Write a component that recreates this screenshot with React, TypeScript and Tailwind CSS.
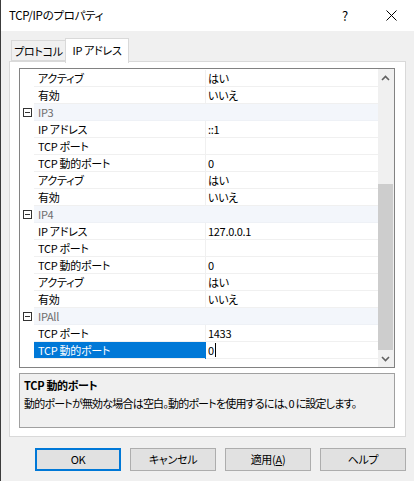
import React from 'react';

type Row =
    | { kind: 'cat'; label: string }
    | { kind: 'prop'; label: string; value: string; selected?: boolean };

const rows: Row[] = [
    { kind: 'prop', label: 'アクティブ', value: 'はい' },
    { kind: 'prop', label: '有効', value: 'いいえ' },
    { kind: 'cat', label: 'IP3' },
    { kind: 'prop', label: 'IP アドレス', value: '::1' },
    { kind: 'prop', label: 'TCP ポート', value: '' },
    { kind: 'prop', label: 'TCP 動的ポート', value: '0' },
    { kind: 'prop', label: 'アクティブ', value: 'はい' },
    { kind: 'prop', label: '有効', value: 'いいえ' },
    { kind: 'cat', label: 'IP4' },
    { kind: 'prop', label: 'IP アドレス', value: '127.0.0.1' },
    { kind: 'prop', label: 'TCP ポート', value: '' },
    { kind: 'prop', label: 'TCP 動的ポート', value: '0' },
    { kind: 'prop', label: 'アクティブ', value: 'はい' },
    { kind: 'prop', label: '有効', value: 'いいえ' },
    { kind: 'cat', label: 'IPAll' },
    { kind: 'prop', label: 'TCP ポート', value: '1433' },
    { kind: 'prop', label: 'TCP 動的ポート', value: '0', selected: true },
];

const Collapse = () => (
    <svg width="9" height="9" viewBox="0 0 9 9" className="block">
        <rect x="0.5" y="0.5" width="8" height="8" fill="white" stroke="#333" />
        <line x1="2" y1="4.5" x2="7" y2="4.5" stroke="#333" />
    </svg>
);

const GridRow = ({ row }: { row: Row }) => {
    if (row.kind === 'cat') {
        return (
            <div className="flex h-[17px]">
                <div className="w-[14px] flex items-center justify-center pl-[1px]">
                    <Collapse />
                </div>
                <div className="flex-1 bg-[#f3f6fb] border-b border-[#eef1f6] pl-[4px] leading-[16px] text-[#6d6d6d]">
                    {row.label}
                </div>
            </div>
        );
    }
    return (
        <div className="flex h-[17px]">
            <div className="w-[14px]" />
            <div
                className={`w-[171px] pl-[4px] leading-[16px] border-b border-[#f0f0f0] whitespace-nowrap ${
                    row.selected ? 'bg-[#0078d7] text-white' : ''
                }`}
            >
                {row.label}
            </div>
            <div className={`w-[1px] ${row.selected ? 'bg-[#0078d7]' : 'bg-[#f0f0f0]'}`} />
            <div className="flex-1 pl-[2px] leading-[16px] border-b border-[#f0f0f0] flex items-center">
                <span>{row.value}</span>
                {row.selected && <span className="ml-[1px] w-[1px] h-[14px] bg-black" />}
            </div>
        </div>
    );
};

const Chevron = ({ up }: { up?: boolean }) => (
    <svg width="9" height="6" viewBox="0 0 9 6" className="block">
        <path
            d={up ? 'M1 5 L4.5 1.5 L8 5' : 'M1 1 L4.5 4.5 L8 1'}
            fill="none"
            stroke="#606060"
            strokeWidth="1.6"
        />
    </svg>
);

const Button = ({ children, primary }: { children: React.ReactNode; primary?: boolean }) => (
    <div
        className={`w-[86px] h-[23px] flex items-center justify-center bg-[#e1e1e1] ${
            primary ? 'border-2 border-[#0078d7]' : 'border border-[#adadad]'
        }`}
    >
        {children}
    </div>
);

const App: React.FC = () => {
    return (
        <div className="w-[414px] h-[481px] bg-[#f0f0f0] border-l border-[#3c3c3c] flex flex-col text-[11px] tracking-[-0.3px] text-black font-['Noto_Sans_CJK_JP',sans-serif] [font-feature-settings:'palt'] overflow-hidden">
            {/* title bar */}
            <div className="h-[31px] bg-white flex items-center pl-[8px] shrink-0 text-[11.5px]">
                <span className="flex-1">TCP/IPのプロパティ</span>
                <span className="w-[46px] text-center text-[13px]">?</span>
                <span className="w-[46px] flex justify-center">
                    <svg width="11" height="11" viewBox="0 0 11 11">
                        <path d="M0.5 0.5 L10.5 10.5 M10.5 0.5 L0.5 10.5" stroke="#000" strokeWidth="1" />
                    </svg>
                </span>
            </div>

            <div className="px-[8px] pt-[7px] flex flex-col">
                {/* tabs */}
                <div className="flex h-[24px] items-end pl-[2px] relative z-10">
                    <div className="w-[54px] h-[21px] border border-[#d9d9d9] border-r-0 bg-[#f0f0f0] flex items-center justify-center leading-[16px] mb-[1px] whitespace-nowrap">
                        プロトコル
                    </div>
                    <div className="w-[64px] h-[25px] border border-[#d9d9d9] border-b-0 bg-white flex items-center justify-center leading-[16px] -mb-[1px] pb-[2px] whitespace-nowrap">
                        IP アドレス
                    </div>
                </div>

                {/* tab panel */}
                <div className="h-[376px] -mt-[1px] border border-[#d9d9d9] bg-white pl-[9px] pr-[10px] pt-[6px] pb-[8px] flex flex-col">
                    <div className="h-[301px] border border-[#828282] flex bg-white">
                        <div className="flex-1 pt-[1px] overflow-hidden">
                            {rows.map((r, i) => (
                                <GridRow key={i} row={r} />
                            ))}
                        </div>
                        <div className="w-[16px] bg-[#f0f0f0] flex flex-col">
                            <div className="h-[17px] flex items-center justify-center pr-[1px]">
                                <Chevron up />
                            </div>
                            <div className="flex-1 flex flex-col">
                                <div className="h-[98px]" />
                                <div className="h-[166px] w-[15px] bg-[#cdcdcd]" />
                            </div>
                            <div className="h-[17px] flex items-center justify-center pr-[1px]">
                                <Chevron />
                            </div>
                        </div>
                    </div>

                    <div className="mt-[5px] h-[55px] border border-[#a0a0a0] bg-[#f0f0f0] px-[4px] pt-[2px] leading-[18px] whitespace-nowrap">
                        <div className="font-bold">TCP 動的ポート</div>
                        <div className="tracking-[-0.8px]">
                            動的ポートが無効な場合は空白。動的ポートを使用するには、0 に設定します。
                        </div>
                    </div>
                </div>
            </div>

            {/* buttons */}
            <div className="flex justify-end gap-[9px] pr-[8px] mt-[11px]">
                <Button primary>OK</Button>
                <Button>キャンセル</Button>
                <Button>
                    適用(<span className="underline">A</span>)
                </Button>
                <Button>ヘルプ</Button>
            </div>
        </div>
    );
};

export default App;
